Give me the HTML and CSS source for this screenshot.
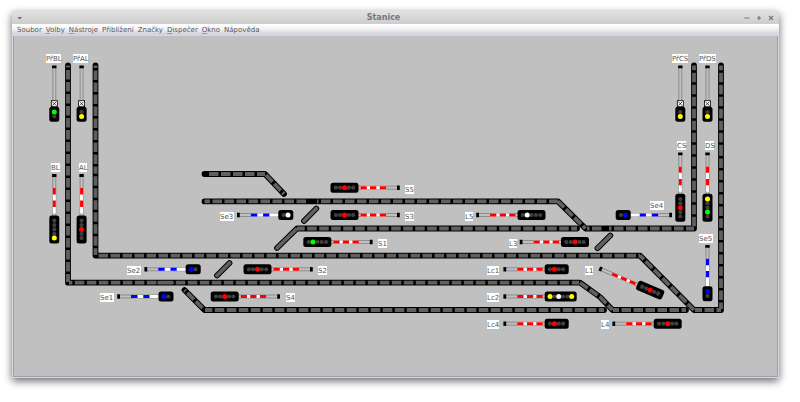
FILE: index.html
```html
<!DOCTYPE html>
<html lang="cs">
<head>
<meta charset="utf-8">
<title>Stanice</title>
<link rel="stylesheet" href="styles.css">
</head>
<body>
<main class="window">
  <header class="titlebar">
    <button class="tool" aria-label="Nabídka okna"><svg class="glyph" viewBox="0 0 6 6"><path d="M.5 2h4.500L2.750 4.500z"/></svg></button>
    <h1 class="title">Stanice</h1>
    <div class="controls">
      <button class="tool" aria-label="Minimalizovat"><svg class="glyph" viewBox="0 0 6 6"><path class="stroke" d="M.5 3h5"/></svg></button>
      <button class="tool" aria-label="Maximalizovat"><svg class="glyph" viewBox="0 0 6 6"><path class="stroke" d="M1 3h4M3 1v4"/></svg></button>
      <button class="tool" aria-label="Zavřít"><svg class="glyph" viewBox="0 0 6 6"><path class="stroke" d="M1 1l4 4M5 1l-4 4"/></svg></button>
    </div>
  </header>
  <nav class="menubar">
    <button class="menu">Soubor</button>
    <button class="menu"><u>V</u>olby</button>
    <button class="menu"><u>N</u>ástroje</button>
    <button class="menu">Přiblížení</button>
    <button class="menu">Značky</button>
    <button class="menu"><u>D</u>ispečer</button>
    <button class="menu"><u>O</u>kno</button>
    <button class="menu">Nápověda</button>
  </nav>
  <svg class="plan" viewBox="13 36 765 341" role="img" aria-label="Plán kolejiště">
    <defs>
      <g id="foot"><path class="post" d="M0-1.500H42V1.500H0z"/><path class="black" d="M-1.300-2.200h2.800v4.400h-2.800z"/></g>
      <g id="mast-entry"><use href="#foot"/><path class="white" d="M12.500-1.500H38v3H12.500z"/><path class="red" d="M12.700-1.500h6.300v3h-6.300zM25.200-1.500h6.300v3h-6.300z"/></g>
      <g id="mast-main"><use href="#foot"/><path class="white" d="M12.500-1.500H38v3H12.500z"/><path class="red" d="M12.500-1.500h6.300v3h-6.300zM22.200-1.500h6.300v3h-6.300zM31.700-1.500h6.300v3h-6.300z"/></g>
      <g id="mast-shunt"><use href="#foot"/><path class="white" d="M12.500-1.500H40v3H12.500z"/><path class="blue" d="M12.500-1.500h6.500v3h-6.500zM24.800-1.500h6.200v3h-6.200z"/></g>
      <g id="head2"><rect class="black" x="40" y="-5" width="15" height="10" rx="2.500"/><g class="off"><circle cx="45.300" r="2.100"/><circle cx="49.700" r="2.100"/></g></g>
      <g id="head4"><rect class="black" x="40" y="-5" width="24" height="10" rx="2.500"/><g class="off"><circle cx="45.300" r="2.100"/><circle cx="49.700" r="2.100"/><circle cx="54" r="2.100"/><circle cx="58.400" r="2.100"/></g></g>
      <g id="head5"><rect class="black" x="40" y="-5" width="28" height="10" rx="2.500"/><g class="off"><circle cx="45.300" r="2.100"/><circle cx="49.700" r="2.100"/><circle cx="54" r="2.100"/><circle cx="58.400" r="2.100"/><circle cx="62.700" r="2.100"/></g></g>
      <g id="head6"><rect class="black" x="40" y="-5" width="32" height="10" rx="2.500"/><g class="off"><circle cx="45.300" r="2.100"/><circle cx="49.700" r="2.100"/><circle cx="54" r="2.100"/><circle cx="58.400" r="2.100"/><circle cx="62.700" r="2.100"/><circle cx="67" r="2.100"/></g></g>
      <g id="distant"><use href="#foot"/><use href="#head2"/><rect class="marker" x="34" y="-3" width="6" height="6"/><path class="cross" d="M35-2l4 4M39-2l-4 4"/></g>
      <g id="entry"><use href="#mast-entry"/><use href="#head5"/></g>
      <g id="main4"><use href="#mast-main"/><use href="#head4"/></g>
      <g id="main5"><use href="#mast-main"/><use href="#head5"/></g>
      <g id="main6"><use href="#mast-main"/><use href="#head6"/></g>
      <g id="shunt"><use href="#mast-shunt"/><use href="#head2"/></g>
    </defs>

    <g class="bed">
      <path d="M68 65.500V282.700H580L600 297 612.500 310H686"/>
      <path d="M95.500 65.500V255.600H640L694 310H721V65.500"/>
      <path d="M204.500 201.400H558L585.500 228.500H694V65.500"/>
      <path d="M204.500 174H265L284 194"/>
      <path d="M577 228.500H297L277 248"/>
      <path d="M184.500 290L204.500 310H604"/>
      <path d="M304 221L316.300 208.500M597.500 248.200L610.300 235.500M217 275.500L229.500 263"/>
    </g>
    <g class="rail">
      <path d="M68 65.500V282" stroke-dashoffset="7.500"/>
      <path d="M69 282.700H157.500" stroke-dashoffset="6.200"/>
      <path class="solid" d="M159 282.700H172"/>
      <path d="M173.500 282.700H579" stroke-dashoffset="9.700"/>
      <path d="M580 282.700L600 297 612.500 310" stroke-dashoffset="0"/>
      <path d="M613 310H686" stroke-dashoffset="3.500"/>
      <path d="M95.500 65.500V171" stroke-dashoffset="7"/>
      <path d="M95.500 171V255" stroke-dashoffset="6.800"/>
      <path d="M96 255.600H640" stroke-dashoffset="9.500"/>
      <path d="M640 255.600L694 310" stroke-dashoffset="4"/>
      <path d="M695 310H721" stroke-dashoffset="2.500"/>
      <path d="M721 65.500V150" stroke-dashoffset="4.700"/>
      <path d="M721 150V309" stroke-dashoffset="3.500"/>
      <path d="M694 65.500V228" stroke-dashoffset="4.700"/>
      <path d="M204.500 201.400H308" stroke-dashoffset="4"/>
      <path d="M317 201.400H558" stroke-dashoffset="8"/>
      <path d="M558 201.400L585.500 228.500" stroke-dashoffset="1"/>
      <path d="M587 228.500H604M609 228.500H694" stroke-dashoffset="7"/>
      <path d="M209 174H265" stroke-dashoffset="0"/>
      <path d="M266 175L284 194" stroke-dashoffset="0"/>
      <path d="M297 228.500H577" stroke-dashoffset="1.800"/>
      <path class="solid" d="M296 229.500L277 248"/>
      <path d="M184.500 290L203 308.500" stroke-dashoffset="8"/>
      <path d="M205 310H604" stroke-dashoffset="2.200"/>
      <path class="solid" d="M304 221L316.300 208.500M597.500 248.200L610.300 235.500M217 275.500L229.500 263"/>
    </g>

    <g class="signals">
      <g transform="translate(54.300 66.700) rotate(90)"><use href="#distant"/><circle class="green" cx="45.300" r="2.500"/></g>
      <g transform="translate(81.600 66.700) rotate(90)"><use href="#distant"/><circle class="yellow" cx="49.700" r="2.500"/></g>
      <g transform="translate(680.300 66.700) rotate(90)"><use href="#distant"/><circle class="yellow" cx="49.700" r="2.500"/></g>
      <g transform="translate(707.500 66.700) rotate(90)"><use href="#distant"/><circle class="yellow" cx="49.700" r="2.500"/></g>
      <g transform="translate(54.300 175.400) rotate(90)"><use href="#entry"/><circle class="yellow" cx="62.700" r="2.500"/></g>
      <g transform="translate(81.600 175.400) rotate(90)"><use href="#entry"/><circle class="red" cx="54" r="2.500"/></g>
      <g transform="translate(680.300 153.700) rotate(90)"><use href="#entry"/><circle class="red" cx="54" r="2.500"/></g>
      <g transform="translate(707.500 153.700) rotate(90)"><use href="#entry"/><circle class="yellow" cx="45.300" r="2.500"/><circle class="green" cx="58.400" r="2.500"/></g>
      <g transform="translate(707.500 246.300) rotate(90)"><use href="#shunt"/><circle class="blue" cx="45.300" r="2.500"/></g>
      <g transform="translate(670.700 215) rotate(180)"><use href="#shunt"/><circle class="blue" cx="45.300" r="2.500"/></g>
      <g transform="translate(238.300 215)"><use href="#shunt"/><circle class="white" cx="49.700" r="2.500"/></g>
      <g transform="translate(145.700 269.300)"><use href="#shunt"/><circle class="blue" cx="45.300" r="2.500"/></g>
      <g transform="translate(118.500 296.500)"><use href="#shunt"/><circle class="blue" cx="45.300" r="2.500"/></g>
      <g transform="translate(398.500 187.700) rotate(180)"><use href="#main5"/><circle class="red" cx="54" r="2.500"/></g>
      <g transform="translate(398.500 215) rotate(180)"><use href="#main5"/><circle class="red" cx="54" r="2.500"/></g>
      <g transform="translate(371.300 242) rotate(180)"><use href="#main5"/><circle class="green" cx="58.400" r="2.500"/></g>
      <g transform="translate(311.500 269.300) rotate(180)"><use href="#main5"/><circle class="red" cx="54" r="2.500"/></g>
      <g transform="translate(278.700 296.500) rotate(180)"><use href="#main5"/><circle class="red" cx="54" r="2.500"/></g>
      <g transform="translate(477.500 215)"><use href="#main5"/><circle class="white" cx="49.700" r="2.500"/></g>
      <g transform="translate(521 242)"><use href="#main5"/><circle class="red" cx="54" r="2.500"/></g>
      <g transform="translate(504.700 269.300)"><use href="#main4"/><circle class="red" cx="49.700" r="2.500"/></g>
      <g transform="translate(504.700 296.500)"><use href="#main6"/><circle class="yellow" cx="45.300" r="2.500"/><circle class="white" cx="54" r="2.500"/><circle class="yellow" cx="67" r="2.500"/></g>
      <g transform="translate(504.700 323.700)"><use href="#main4"/><circle class="red" cx="49.700" r="2.500"/></g>
      <g transform="translate(613.700 323.700)"><use href="#main5"/><circle class="red" cx="54" r="2.500"/></g>
      <g transform="translate(600.500 269) rotate(23)"><use href="#main5"/><circle class="red" cx="54" r="2.500"/></g>
    </g>

    <path class="plates" d="M46 54h15v9h-15zM73 54h15v9h-15zM672 54h16v9h-16zM699 54h17v9h-17zM51 163h9v9h-9zM79 163h8v9h-8zM677 141h9v9h-9zM705 141h9v9h-9zM650 201h14v9h-14zM699 234h14v9h-14zM220 212h14v9h-14zM127 266h14v9h-14zM100 293h14v9h-14zM405 185h9v9h-9zM405 212h9v9h-9zM378 239h9v9h-9zM318 266h9v9h-9zM286 293h9v9h-9zM465 212h8v9h-8zM509 239h8v9h-8zM487 266h12v9h-12zM487 293h12v9h-12zM487 320h12v9h-12zM585 266h8v9h-8zM601 320h8v9h-8z"/>
    <g class="labels">
      <text x="46" y="61">PřBL</text><text x="73" y="61">PřAL</text><text x="672" y="61">PřCS</text><text x="699" y="61">PřDS</text>
      <text x="51" y="170">BL</text><text x="79" y="170">AL</text><text x="677" y="148">CS</text><text x="705" y="148">DS</text>
      <text x="650" y="208">Se4</text><text x="699" y="241">Se5</text><text x="220" y="219">Se3</text><text x="127" y="273">Se2</text><text x="100" y="300">Se1</text>
      <text x="405" y="192">S5</text><text x="405" y="219">S3</text><text x="378" y="246">S1</text><text x="318" y="273">S2</text><text x="286" y="300">S4</text>
      <text x="465" y="219">L5</text><text x="509" y="246">L3</text><text x="487" y="273">Lc1</text><text x="487" y="300">Lc2</text><text x="487" y="327">Lc4</text>
      <text x="585" y="273">L1</text><text x="601" y="327">L4</text>
    </g>
  </svg>
</main>
</body>
</html>
```
FILE: styles.css
```css
* { box-sizing: border-box; }
body {
  margin: 0;
  min-height: 100vh;
  padding: 11px 21px 20px 12px;
  background: #fff;
  font-family: "DejaVu Sans", sans-serif;
  font-size: 7px;
}
button { border: 0; padding: 0; background: none; font: inherit; color: inherit; }
.window {
  border-radius: 3px 3px 0 0;
  background: #c0c0c0;
  box-shadow: 0 3px 9px rgba(0, 0, 0, .6);
  overflow: hidden;
}
.titlebar {
  display: grid;
  grid-template-columns: auto 1fr auto;
  align-items: center;
  height: 13px;
  padding: 0 5px;
  background: linear-gradient(#e2e2e2, #cdcdcd);
  color: #777;
}
.title { margin: 0; font-size: 8px; line-height: 14px; font-weight: bold; text-align: center; }
.controls { display: flex; gap: 6px; }
.tool { display: flex; width: 6px; height: 6px; }
.glyph { width: 6px; height: 6px; fill: #666; }
.stroke { fill: none; stroke: #777; stroke-width: 1.2; }
.menubar {
  display: flex;
  gap: 4px;
  height: 12px;
  padding: 0 5px;
  line-height: 12px;
  color: #555;
  background: linear-gradient(#fff, #f2f3f5 40%, #d2d6de 80%, #d2d6de);
}
.menu { line-height: 12px; }
.menu u { text-decoration-color: #999; }
.plan {
  display: block;
  width: 100%;
  height: auto;
  border: 1px solid #d5dae2;
  border-top: 0;
  box-shadow: inset 1px 0 #98a0ac, inset -1px -1px #98a0ac;
}
.bed { fill: none; stroke: #000; stroke-width: 5.8; stroke-linecap: round; stroke-linejoin: round; }
.rail { fill: none; stroke: #606060; stroke-width: 3.8; stroke-dasharray: 9.5 2.5; }
.rail .solid { stroke-dasharray: none; stroke-linecap: round; }
.black { fill: #000; }
.white { fill: #fff; }
.red { fill: #f00; }
.green { fill: #0f0; }
.blue { fill: #00f; }
.yellow { fill: #ff0; }
.off { fill: #404040; }
.post { fill: #c0c0c0; stroke: #777; stroke-width: .7; }
.marker { fill: #fff; stroke: #000; stroke-width: .8; }
.cross { fill: none; stroke: #000; stroke-width: .7; }
.plates { fill: #fff; }
.labels { font-size: 7px; fill: #555; }
```
